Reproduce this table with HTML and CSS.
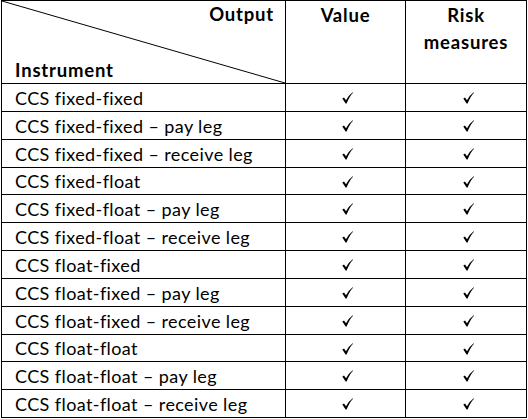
FILE: index.html
```html
<!DOCTYPE html>
<html>
<head>
<meta charset="utf-8">
<link rel="stylesheet" href="styles.css">
</head>
<body>
<div class="grid">
  <div class="cell corner">
    <svg class="diag" viewBox="0 0 100 100" preserveAspectRatio="none"><line x1="0" y1="0" x2="100" y2="100" stroke="#000" stroke-width="1" vector-effect="non-scaling-stroke"/></svg>
    <span class="out">Output</span>
    <span class="ins">Instrument</span>
  </div>
  <div class="cell hc">Value</div>
  <div class="cell hc">Risk<br>measures</div>

  <div class="cell name">CCS fixed-fixed</div>
  <div class="cell ck"><svg class="tick" viewBox="0 0 11 12"><path d="M0.3 6.6 L2 5.6 L4 8.2 Q6.5 3.5 10.7 0.3 L11 0.8 Q7.4 4.5 4.6 11.6 L3.6 11.6 Z"/></svg></div>
  <div class="cell ck"><svg class="tick" viewBox="0 0 11 12"><path d="M0.3 6.6 L2 5.6 L4 8.2 Q6.5 3.5 10.7 0.3 L11 0.8 Q7.4 4.5 4.6 11.6 L3.6 11.6 Z"/></svg></div>

  <div class="cell name">CCS fixed-fixed – pay leg</div>
  <div class="cell ck"><svg class="tick" viewBox="0 0 11 12"><path d="M0.3 6.6 L2 5.6 L4 8.2 Q6.5 3.5 10.7 0.3 L11 0.8 Q7.4 4.5 4.6 11.6 L3.6 11.6 Z"/></svg></div>
  <div class="cell ck"><svg class="tick" viewBox="0 0 11 12"><path d="M0.3 6.6 L2 5.6 L4 8.2 Q6.5 3.5 10.7 0.3 L11 0.8 Q7.4 4.5 4.6 11.6 L3.6 11.6 Z"/></svg></div>

  <div class="cell name">CCS fixed-fixed – receive leg</div>
  <div class="cell ck"><svg class="tick" viewBox="0 0 11 12"><path d="M0.3 6.6 L2 5.6 L4 8.2 Q6.5 3.5 10.7 0.3 L11 0.8 Q7.4 4.5 4.6 11.6 L3.6 11.6 Z"/></svg></div>
  <div class="cell ck"><svg class="tick" viewBox="0 0 11 12"><path d="M0.3 6.6 L2 5.6 L4 8.2 Q6.5 3.5 10.7 0.3 L11 0.8 Q7.4 4.5 4.6 11.6 L3.6 11.6 Z"/></svg></div>

  <div class="cell name">CCS fixed-float</div>
  <div class="cell ck"><svg class="tick" viewBox="0 0 11 12"><path d="M0.3 6.6 L2 5.6 L4 8.2 Q6.5 3.5 10.7 0.3 L11 0.8 Q7.4 4.5 4.6 11.6 L3.6 11.6 Z"/></svg></div>
  <div class="cell ck"><svg class="tick" viewBox="0 0 11 12"><path d="M0.3 6.6 L2 5.6 L4 8.2 Q6.5 3.5 10.7 0.3 L11 0.8 Q7.4 4.5 4.6 11.6 L3.6 11.6 Z"/></svg></div>

  <div class="cell name">CCS fixed-float – pay leg</div>
  <div class="cell ck"><svg class="tick" viewBox="0 0 11 12"><path d="M0.3 6.6 L2 5.6 L4 8.2 Q6.5 3.5 10.7 0.3 L11 0.8 Q7.4 4.5 4.6 11.6 L3.6 11.6 Z"/></svg></div>
  <div class="cell ck"><svg class="tick" viewBox="0 0 11 12"><path d="M0.3 6.6 L2 5.6 L4 8.2 Q6.5 3.5 10.7 0.3 L11 0.8 Q7.4 4.5 4.6 11.6 L3.6 11.6 Z"/></svg></div>

  <div class="cell name">CCS fixed-float – receive leg</div>
  <div class="cell ck"><svg class="tick" viewBox="0 0 11 12"><path d="M0.3 6.6 L2 5.6 L4 8.2 Q6.5 3.5 10.7 0.3 L11 0.8 Q7.4 4.5 4.6 11.6 L3.6 11.6 Z"/></svg></div>
  <div class="cell ck"><svg class="tick" viewBox="0 0 11 12"><path d="M0.3 6.6 L2 5.6 L4 8.2 Q6.5 3.5 10.7 0.3 L11 0.8 Q7.4 4.5 4.6 11.6 L3.6 11.6 Z"/></svg></div>

  <div class="cell name">CCS float-fixed</div>
  <div class="cell ck"><svg class="tick" viewBox="0 0 11 12"><path d="M0.3 6.6 L2 5.6 L4 8.2 Q6.5 3.5 10.7 0.3 L11 0.8 Q7.4 4.5 4.6 11.6 L3.6 11.6 Z"/></svg></div>
  <div class="cell ck"><svg class="tick" viewBox="0 0 11 12"><path d="M0.3 6.6 L2 5.6 L4 8.2 Q6.5 3.5 10.7 0.3 L11 0.8 Q7.4 4.5 4.6 11.6 L3.6 11.6 Z"/></svg></div>

  <div class="cell name">CCS float-fixed – pay leg</div>
  <div class="cell ck"><svg class="tick" viewBox="0 0 11 12"><path d="M0.3 6.6 L2 5.6 L4 8.2 Q6.5 3.5 10.7 0.3 L11 0.8 Q7.4 4.5 4.6 11.6 L3.6 11.6 Z"/></svg></div>
  <div class="cell ck"><svg class="tick" viewBox="0 0 11 12"><path d="M0.3 6.6 L2 5.6 L4 8.2 Q6.5 3.5 10.7 0.3 L11 0.8 Q7.4 4.5 4.6 11.6 L3.6 11.6 Z"/></svg></div>

  <div class="cell name">CCS float-fixed – receive leg</div>
  <div class="cell ck"><svg class="tick" viewBox="0 0 11 12"><path d="M0.3 6.6 L2 5.6 L4 8.2 Q6.5 3.5 10.7 0.3 L11 0.8 Q7.4 4.5 4.6 11.6 L3.6 11.6 Z"/></svg></div>
  <div class="cell ck"><svg class="tick" viewBox="0 0 11 12"><path d="M0.3 6.6 L2 5.6 L4 8.2 Q6.5 3.5 10.7 0.3 L11 0.8 Q7.4 4.5 4.6 11.6 L3.6 11.6 Z"/></svg></div>

  <div class="cell name">CCS float-float</div>
  <div class="cell ck"><svg class="tick" viewBox="0 0 11 12"><path d="M0.3 6.6 L2 5.6 L4 8.2 Q6.5 3.5 10.7 0.3 L11 0.8 Q7.4 4.5 4.6 11.6 L3.6 11.6 Z"/></svg></div>
  <div class="cell ck"><svg class="tick" viewBox="0 0 11 12"><path d="M0.3 6.6 L2 5.6 L4 8.2 Q6.5 3.5 10.7 0.3 L11 0.8 Q7.4 4.5 4.6 11.6 L3.6 11.6 Z"/></svg></div>

  <div class="cell name">CCS float-float – pay leg</div>
  <div class="cell ck"><svg class="tick" viewBox="0 0 11 12"><path d="M0.3 6.6 L2 5.6 L4 8.2 Q6.5 3.5 10.7 0.3 L11 0.8 Q7.4 4.5 4.6 11.6 L3.6 11.6 Z"/></svg></div>
  <div class="cell ck"><svg class="tick" viewBox="0 0 11 12"><path d="M0.3 6.6 L2 5.6 L4 8.2 Q6.5 3.5 10.7 0.3 L11 0.8 Q7.4 4.5 4.6 11.6 L3.6 11.6 Z"/></svg></div>

  <div class="cell name">CCS float-float – receive leg</div>
  <div class="cell ck"><svg class="tick" viewBox="0 0 11 12"><path d="M0.3 6.6 L2 5.6 L4 8.2 Q6.5 3.5 10.7 0.3 L11 0.8 Q7.4 4.5 4.6 11.6 L3.6 11.6 Z"/></svg></div>
  <div class="cell ck"><svg class="tick" viewBox="0 0 11 12"><path d="M0.3 6.6 L2 5.6 L4 8.2 Q6.5 3.5 10.7 0.3 L11 0.8 Q7.4 4.5 4.6 11.6 L3.6 11.6 Z"/></svg></div>
</div>
</body>
</html>
```

FILE: styles.css
```css
html, body {
  margin: 0;
  padding: 0;
  background: #fff;
}
.grid {
  margin-left: 1px;
  width: 526px;
  box-sizing: border-box;
  display: grid;
  grid-template-columns: 284px 120px 121px;
  grid-template-rows: 83px repeat(3, 28px) 27px repeat(5, 28px) 27px 28px 28px;
  border-top: 1px solid #000;
  border-left: 1px solid #000;
  font-family: Lato, "Open Sans", sans-serif;
  font-size: 18px;
  letter-spacing: 0.4px;
  font-variant-ligatures: none;
  color: #000;
}
.cell {
  box-sizing: border-box;
  border-right: 1px solid #000;
  border-bottom: 1px solid #000;
  min-width: 0;
}
.corner, .hc {
  font-weight: 700;
  font-size: 18.5px;
  letter-spacing: 0.8px;
}
.corner {
  position: relative;
  display: flex;
  flex-direction: column;
  justify-content: space-between;
  padding: 1px 11px 1px 13px;
}
.diag {
  position: absolute;
  left: 0;
  top: 0;
  width: 100%;
  height: 100%;
}
.out {
  align-self: flex-end;
  line-height: 24px;
}
.ins {
  line-height: 24px;
}
.hc {
  text-align: center;
  line-height: 27px;
  padding-top: 1px;
}
.name {
  display: flex;
  align-items: center;
  padding-left: 13px;
  white-space: nowrap;
}
.ck {
  display: flex;
  align-items: center;
  justify-content: center;
}
.tick {
  width: 11px;
  height: 12px;
  fill: #000;
  margin-left: 4px;
  margin-top: 1px;
}
```
